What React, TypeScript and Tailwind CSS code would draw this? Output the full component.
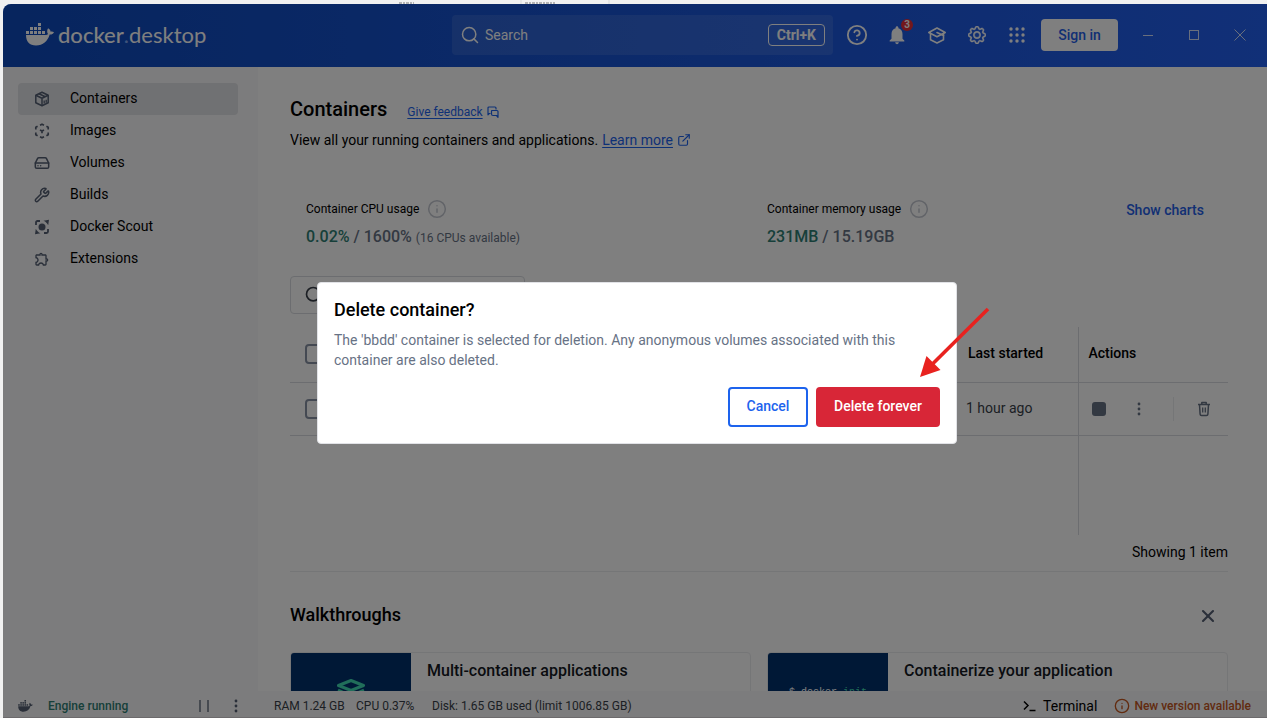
import React from "react";
import { CircleHelp, ExternalLink, HardDrive, Info, Search, Wrench, X } from "lucide-react";
import { BsGear } from "react-icons/bs";
import { MdNotifications, MdOutlineExtension } from "react-icons/md";

type IconProps = { className?: string };

function Whale({ className }: IconProps) {
  return (
    <svg viewBox="0 0 28 23" className={className} fill="currentColor" aria-hidden="true">
      <rect x="12" y="0" width="3" height="3" />
      <rect x="4" y="4" width="3" height="3" />
      <rect x="8" y="4" width="3" height="3" />
      <rect x="12" y="4" width="3" height="3" />
      <rect x="0" y="8" width="3" height="3" />
      <rect x="4" y="8" width="3" height="3" />
      <rect x="8" y="8" width="3" height="3" />
      <rect x="12" y="8" width="3" height="3" />
      <rect x="16" y="8" width="3" height="3" />
      <path d="M0 12h19.3c1.200 0 2.200-.4 2.700-1-1.200-1.700-1-4.200.1-5.800 1.500.9 2.500 2.200 2.500 3.500 1.200-.3 2.400-.1 3.400.6-.8 1.700-2.300 2.400-4.300 2.300C21.600 18.500 17 22.500 10 22.500 3.500 22.500 0 18.500 0 12z" />
    </svg>
  );
}

function Graduation({ className }: IconProps) {
  return (
    <svg viewBox="0 0 20 20" className={className} fill="none" stroke="currentColor" strokeWidth="1.6" strokeLinejoin="round" strokeLinecap="round" aria-hidden="true">
      <path d="M1.800 7.500 10 3l8.200 4.500-8.200 4.200z" />
      <path d="M3.500 8.800v6L10 18l6.500-3.200v-6" />
      <path d="M10 7.500l6.500 3" />
    </svg>
  );
}

function Dots({ className }: IconProps) {
  return (
    <svg viewBox="0 0 16 16" className={className} fill="currentColor" aria-hidden="true">
      {[2, 8, 14].map((y) => [2, 8, 14].map((x) => <circle key={`${x}-${y}`} cx={x} cy={y} r="1.700" />))}
    </svg>
  );
}

function Kebab({ className }: IconProps) {
  return (
    <svg viewBox="0 0 4 14" className={className} fill="currentColor" aria-hidden="true">
      <circle cx="2" cy="2" r="1.400" />
      <circle cx="2" cy="7" r="1.400" />
      <circle cx="2" cy="12" r="1.400" />
    </svg>
  );
}

function Cube({ className }: IconProps) {
  return (
    <svg viewBox="0 0 16 16" className={className} fill="none" stroke="currentColor" strokeWidth="1.500" strokeLinejoin="round" aria-hidden="true">
      <path d="M8 1.300 14.200 4.200v7.600L8 14.700 1.800 11.800V4.200z" />
      <path d="M1.800 4.200 8 7.200l6.200-3M8 7.200v7.500M5 2.700l6.200 3" />
      <path d="M10.200 9.600v3M12.200 8.700v3" strokeWidth="1.300" />
    </svg>
  );
}

function ImageLayers({ className }: IconProps) {
  return (
    <svg viewBox="0 0 16 16" className={className} fill="none" stroke="currentColor" strokeWidth="1.700" strokeLinejoin="round" aria-hidden="true">
      <path d="M6 2.200 8 1.200l2 1M12.400 3.300l1.800 1v2.200M14.200 9.500v2.200l-1.800 1M10 13.800l-2 1-2-1M3.600 12.700l-1.800-1V9.500M1.800 6.500V4.300l1.800-1" />
      <path d="M6 6.900 8 8l2-1.100M8 8v2.300" />
    </svg>
  );
}

function Scout({ className }: IconProps) {
  return (
    <svg viewBox="0 0 16 16" className={className} fill="none" stroke="currentColor" strokeWidth="1.800" aria-hidden="true">
      <circle cx="8" cy="8" r="3.500" fill="currentColor" stroke="none" />
      <path d="M2 6V3.500Q2 2 3.500 2H6M14 10v2.500q0 1.500-1.500 1.500H10" />
      <path d="M9.500 1.700 15 .8l-.8 5.400c-.8-1.800-2.400-3.600-4.700-4.500zM6.500 14.300 1 15.200l.8-5.400c.8 1.800 2.400 3.600 4.700 4.500z" fill="currentColor" stroke="none" />
    </svg>
  );
}

function Feedback({ className }: IconProps) {
  return (
    <svg viewBox="0 0 12 12" className={className} fill="none" stroke="currentColor" strokeWidth="1.200" strokeLinejoin="round" aria-hidden="true">
      <path d="M3.500 7.500H2.300L1 8.800V2q0-1 1-1h6q1 0 1 1v1.500" />
      <path d="M5 4.500h5q1 0 1 1v5.800L9.500 9.500H6q-1.500 0-1.500-1.500V5z" />
    </svg>
  );
}

function Trash({ className }: IconProps) {
  return (
    <svg viewBox="0 0 14 16" className={className} fill="none" stroke="currentColor" strokeWidth="1.500" strokeLinejoin="round" aria-hidden="true">
      <path d="M1 3.500h12M4.800 3.300V1.500h4.400v1.800M2.500 3.500l.6 9.600q.1 1.300 1.400 1.300h5q1.300 0 1.400-1.300l.6-9.600" />
      <path d="M5.700 6.500v5M8.300 6.500v5" strokeWidth="1.300" />
    </svg>
  );
}

const navItems = [
  { label: "Containers", icon: <Cube className="size-4" />, active: true },
  { label: "Images", icon: <ImageLayers className="size-4" /> },
  { label: "Volumes", icon: <HardDrive className="size-4" strokeWidth={2.3} /> },
  { label: "Builds", icon: <Wrench className="size-4" strokeWidth={2.3} /> },
  { label: "Docker Scout", icon: <Scout className="size-4" /> },
  { label: "Extensions", icon: <MdOutlineExtension className="size-[18px]" /> },
];

function Header() {
  return (
    <header className="flex h-[63px] shrink-0 items-center bg-linear-to-r from-[#0e4abc] to-[#2360f0] pr-4 pb-0.5 text-white">
      <div className="flex flex-1 items-center gap-1 pl-[23px]">
        <Whale className="h-[23px] w-7" />
        <div className="font-['Lato',sans-serif] text-[22px] leading-6">
          <span className="font-medium">docker</span>
          <span className="text-[#7fa6f5]">.</span>
          <span>desktop</span>
        </div>
      </div>
      <label className="flex h-10 w-[381px] items-center gap-[5px] rounded-sm bg-white/10 px-2">
        <Search className="size-5" strokeWidth={1.8} />
        <input
          type="text"
          aria-label="Search"
          placeholder="Search"
          className="min-w-0 flex-1 bg-transparent text-sm text-white outline-none placeholder:text-white"
        />
        <kbd className="rounded-sm border border-white px-2 font-['Roboto',sans-serif] text-sm leading-5 font-bold">Ctrl+K</kbd>
      </label>
      <div className="ml-3 flex items-center gap-4">
        <button aria-label="Help" className="flex size-6 items-center justify-center">
          <CircleHelp className="size-[22px]" />
        </button>
        <button aria-label="Notifications" className="relative flex size-6 items-center justify-center">
          <MdNotifications className="size-[22px]" />
          <span className="absolute -top-1 -right-1 flex size-3 items-center justify-center rounded-full bg-[#e52e38] text-[10px] font-bold">3</span>
        </button>
        <button aria-label="Learning center" className="flex size-6 items-center justify-center">
          <Graduation className="size-5" />
        </button>
        <button aria-label="Settings" className="flex size-6 items-center justify-center">
          <BsGear className="size-[18px]" strokeWidth={0.5} />
        </button>
        <button aria-label="Apps" className="flex size-6 items-center justify-center">
          <Dots className="size-4" />
        </button>
      </div>
      <button className="ml-3 h-8 w-[77px] rounded-sm bg-white text-sm font-medium text-[#2560e8]">Sign in</button>
      <div className="ml-[19px] flex items-center gap-[24px] opacity-80">
        <button aria-label="Minimize" className="flex size-[22px] items-center justify-center">
          <svg viewBox="0 0 12 12" className="size-3" stroke="currentColor"><path d="M1 6.500h10" /></svg>
        </button>
        <button aria-label="Maximize" className="flex size-[22px] items-center justify-center">
          <svg viewBox="0 0 12 12" className="size-3" fill="none" stroke="currentColor"><rect x="1.500" y="1.500" width="9" height="9" /></svg>
        </button>
        <button aria-label="Close" className="flex size-[22px] items-center justify-center">
          <svg viewBox="0 0 12 12" className="size-3" stroke="currentColor"><path d="M.5.5l11 11M11.500.5l-11 11" /></svg>
        </button>
      </div>
    </header>
  );
}

function Sidebar() {
  return (
    <nav className="w-[255px] shrink-0 bg-[#f9f9fa] pt-4 pr-5 pl-[15px]">
      {navItems.map((item) => (
        <a
          key={item.label}
          href="#"
          className={`flex h-8 items-center rounded-sm pl-4 ${item.active ? "bg-[#e1e2e6]" : ""}`}
        >
          <span className="flex w-4 justify-center text-[#545f73]">{item.icon}</span>
          <span className="ml-5 pb-0.5 text-sm leading-5">{item.label}</span>
        </a>
      ))}
    </nav>
  );
}

function Usage() {
  return (
    <section className="mt-[49px] grid grid-cols-2 gap-4">
      <div className="pl-4">
        <div className="flex h-5 items-center gap-2 text-xs">
          Container CPU usage
          <Info className="size-5 text-[#c4c8d1]" strokeWidth={1.8} />
        </div>
        <div className="mt-2 text-base leading-5 font-medium text-[#677285]">
          <span className="text-[#2e7f74]">0.02%</span> / 1600% <span className="text-xs font-normal">(16 CPUs available)</span>
        </div>
      </div>
      <div className="flex justify-between pr-6">
        <div>
          <div className="flex h-5 items-center gap-2 text-xs">
            Container memory usage
            <Info className="size-5 text-[#c4c8d1]" strokeWidth={1.8} />
          </div>
          <div className="mt-2 text-base leading-5 font-medium text-[#677285]">
            <span className="text-[#2e7f74]">231MB</span> / 15.19GB
          </div>
        </div>
        <button className="h-[22px] text-sm font-medium text-[#2560e8]">Show charts</button>
      </div>
    </section>
  );
}

function Check({ label }: { label: string }) {
  return <input type="checkbox" aria-label={label} className="block size-5 appearance-none rounded-sm border-2 border-[#8993a5]" />;
}

function ContainerTable() {
  return (
    <table className="mt-[13px] w-full table-fixed text-left text-sm">
      <colgroup>
        <col className="w-[54px]" />
        <col />
        <col className="w-[120px]" />
        <col className="w-[150px]" />
      </colgroup>
      <thead>
        <tr className="h-[55px] border-b border-[#d8dae0]">
          <th className="pl-[15px]"><Check label="Select all containers" /></th>
          <td />
          <th className="pb-0.5 pl-[10px] font-medium">Last started</th>
          <th className="border-l border-[#d8dae0] pb-0.5 pl-[10px] font-medium">Actions</th>
        </tr>
      </thead>
      <tbody>
        <tr className="h-[53px] border-b border-[#d8dae0]">
          <td className="pl-[15px]"><Check label="Select container" /></td>
          <td />
          <td className="pb-0.5 pl-2 text-[#393f49]">1 hour ago</td>
          <td className="border-l border-[#d8dae0] pr-[17px] pl-[13px]">
            <div className="flex items-center justify-between text-[#677285]">
              <button aria-label="Stop" className="flex">
                <span className="size-[14px] rounded-[3px] bg-[#677285]" />
              </button>
              <button aria-label="More actions" className="flex w-5 justify-center">
                <Kebab className="h-[14px] w-1" />
              </button>
              <span className="h-6 w-px bg-[#ebecef]" />
              <button aria-label="Delete" className="flex">
                <Trash className="h-4 w-[14px]" />
              </button>
            </div>
          </td>
        </tr>
        <tr className="h-[100px]">
          <td colSpan={3} />
          <td className="border-l border-[#d8dae0]" />
        </tr>
      </tbody>
    </table>
  );
}

function Walkthroughs() {
  return (
    <section className="mt-[9px] border-t border-[#ebecef] pt-8">
      <div className="flex h-6 items-center justify-between pr-[10px]">
        <h2 className="pb-0.5 text-lg leading-6 font-medium">Walkthroughs</h2>
        <button aria-label="Dismiss walkthroughs" className="text-[#545f73]">
          <X className="size-5" strokeWidth={2.5} />
        </button>
      </div>
      <div className="mt-6 grid grid-cols-2 gap-4">
        <article className="flex h-24 overflow-hidden rounded-sm border border-[#ebecef]">
          <div className="flex w-[120px] justify-center bg-[#00306c] pt-6">
            <svg viewBox="0 0 32 32" className="size-8" fill="none" stroke="#42dcb4" strokeWidth="3" strokeLinejoin="round" aria-hidden="true">
              <path d="M16 3.500 28.500 8.500 16 13.500 3.500 8.500z" />
              <path d="M3 13l13 6 13-6M3 19l13 6 13-6" />
            </svg>
          </div>
          <h3 className="px-4 pt-1.5 text-base leading-6 font-medium text-[#14181f]">Multi-container applications</h3>
        </article>
        <article className="flex h-24 overflow-hidden rounded-sm border border-[#ebecef]">
          <div className="w-[120px] bg-[#00306c] pt-8 text-center font-['Liberation_Mono',monospace] text-[10px] leading-4 text-white">
            $ docker <span className="text-[#42dcb4]">init</span>
          </div>
          <h3 className="px-4 pt-1.5 text-base leading-6 font-medium text-[#14181f]">Containerize your application</h3>
        </article>
      </div>
    </section>
  );
}

function StatusBar() {
  return (
    <footer className="flex h-[27px] shrink-0 items-center border-b border-[#d8d4d8] bg-[#f9f9fa] pt-1 pr-4 pl-[15px] text-xs text-[#393f49]">
      <div className="flex w-[256px] items-center">
        <Whale className="h-3 w-[15px] text-[#545f73]" />
        <span className="ml-[15px] flex-1 font-medium text-[#2e7f74]">Engine running</span>
        <button aria-label="Pause" className="flex text-[#545f73]">
          <svg viewBox="0 0 10 12" className="h-3 w-[10px]" stroke="currentColor" strokeWidth="1.300"><path d="M1 0v12M9 0v12" /></svg>
        </button>
        <button aria-label="Engine menu" className="mr-9 ml-[25px] flex text-[#545f73]">
          <Kebab className="h-[14px] w-1" />
        </button>
      </div>
      <span className="w-[82px]">RAM 1.24 GB</span>
      <span className="w-[76px]">CPU 0.37%</span>
      <span className="flex-1">Disk: 1.65 GB used (limit 1006.85 GB)</span>
      <button className="flex items-center gap-[7px] text-sm leading-5 text-black">
        <svg viewBox="0 0 13 12" className="h-3 w-[13px]" fill="none" stroke="currentColor" strokeWidth="1.500"><path d="M1 1.500l4 4-4 4M6.500 10.500h6" /></svg>
        Terminal
      </button>
      <button className="ml-[17px] flex items-center gap-1 font-medium text-[#c4561e]">
        <Info className="size-4" />
        New version available
      </button>
    </footer>
  );
}

function DeleteDialog() {
  return (
    <div className="absolute inset-0 flex items-center justify-center bg-black/50 pt-1 pl-1">
      <div role="dialog" aria-modal="true" aria-labelledby="dialog-title" className="relative w-[640px] rounded-sm border border-[#e1e2e6] bg-white px-4 pt-[15px] pb-4">
        <h2 id="dialog-title" className="text-lg leading-6 font-medium">Delete container?</h2>
        <p className="mt-2 text-sm leading-5 text-[#677285]">
          The 'bbdd' container is selected for deletion. Any anonymous volumes associated with this container are also deleted.
        </p>
        <div className="mt-[17px] flex justify-end gap-2 text-sm font-medium">
          <button className="h-10 w-20 rounded-sm border-2 border-[#1d63ed] pb-0.5 text-[#1d63ed]">Cancel</button>
          <button className="h-10 w-[124px] rounded-sm bg-[#d82637] pb-0.5 text-white">Delete forever</button>
        </div>
        <svg viewBox="0 0 72 72" className="absolute top-[24px] left-[601px] size-[72px]" aria-hidden="true">
          <path d="M69 2 14 56.500" stroke="#e8221f" strokeWidth="3.600" />
          <path d="M1 70 7.500 49 21.500 63z" fill="#e8221f" />
        </svg>
      </div>
    </div>
  );
}

export default function App() {
  return (
    <div className="flex h-screen flex-col bg-[#f1f1f1] font-['Roboto',sans-serif] text-black">
      <svg className="h-1 w-full shrink-0" aria-hidden="true">
        <path d="M399 3h15M525 3h30" stroke="#777" strokeDasharray="3 1 2 1" />
        <path d="M521 0v4M609 0v4" stroke="#d9d9d9" />
      </svg>
      <div className="relative ml-[3px] flex min-h-0 flex-1 flex-col overflow-hidden rounded-tl-lg bg-white">
        <Header />
        <div className="flex min-h-0 flex-1">
          <Sidebar />
          <main className="min-w-0 flex-1 overflow-hidden pt-[29px] pr-[39px] pl-8">
            <div className="flex h-[26px] items-center gap-5">
              <h1 className="text-xl leading-6 font-medium">Containers</h1>
              <a href="#" className="flex items-center gap-1 pt-1.5 text-xs text-[#1d63ed]">
                <span className="underline underline-offset-2">Give feedback</span>
                <Feedback className="size-3" />
              </a>
            </div>
            <p className="mt-2 flex items-center gap-1 text-sm leading-5">
              View all your running containers and applications.
              <a href="#" className="flex items-center gap-1 text-[#1d63ed]">
                <span className="underline underline-offset-2">Learn more</span>
                <ExternalLink className="size-[14px]" />
              </a>
            </p>
            <Usage />
            <label className="mt-[29px] flex h-[38px] w-[235px] items-center rounded-sm border border-[#d8dae0] px-[13px]">
              <Search className="size-5 text-[#393f49]" />
              <input type="text" aria-label="Search containers" className="min-w-0 flex-1 bg-transparent text-sm outline-none" />
            </label>
            <ContainerTable />
            <p className="mt-[7px] text-right text-sm leading-5">Showing 1 item</p>
            <Walkthroughs />
          </main>
        </div>
        <StatusBar />
        <DeleteDialog />
      </div>
    </div>
  );
}
